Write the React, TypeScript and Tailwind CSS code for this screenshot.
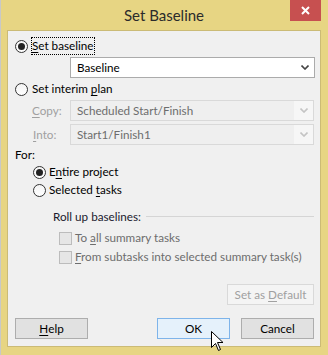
const font = "font-['Segoe_UI','Lato',sans-serif]";

function Radio({ checked }: { checked?: boolean }) {
  return (
    <span className="w-[13px] h-[13px] rounded-full border border-[#333] bg-gradient-to-b from-[#f4f4f4] to-white flex items-center justify-center shrink-0">
      {checked && <span className="w-[7px] h-[7px] rounded-full bg-[#222]" />}
    </span>
  );
}

function Chevron({ color }: { color: string }) {
  return (
    <svg width="8" height="5" viewBox="0 0 8 5">
      <polyline points="0.5,0.5 4,4 7.5,0.5" fill="none" stroke={color} strokeWidth="1.6" />
    </svg>
  );
}

function Select({ value, disabled }: { value: string; disabled?: boolean }) {
  return (
    <div
      className={`ml-[56px] w-[245px] h-[21px] border flex items-center ${
        disabled ? "border-[#d9d9d9] bg-[#efefef] text-[#6d6d6d]" : "border-[#ababab] bg-white text-black"
      }`}
    >
      <span className="flex-1 pl-[6px]">{value}</span>
      <span className={`w-[19px] h-full flex items-center justify-center ${disabled ? "bg-[#f6f6f6]" : ""}`}>
        <Chevron color={disabled ? "#c4c4c4" : "#444"} />
      </span>
    </div>
  );
}

function Button({ children, className = "" }: { children: React.ReactNode; className?: string }) {
  return (
    <div
      className={`h-[21px] border flex items-center justify-center ${className}`}
    >
      {children}
    </div>
  );
}

export default function App() {
  return (
    <div className={`w-[328px] h-[355px] bg-[#e7d583] border-l border-[#c8c8c8] ${font} text-[11.7px] leading-none relative`}>
      <div className="h-[30px] flex items-center justify-center text-[15px] text-[#2b2b2b] pr-[1px]">
        Set Baseline
      </div>
      <div className="absolute right-[7px] top-0 w-[31px] h-[21px] bg-[#c75050] flex items-center justify-center">
        <svg width="9" height="9" viewBox="0 0 9 9">
          <path d="M1 1 L8 8 M8 1 L1 8" stroke="white" strokeWidth="2" />
        </svg>
      </div>

      <div className="ml-[6px] w-[314px] h-[317px] border border-[#cbbb76] bg-[#f0f0f0] px-[6px] flex flex-col text-black">
        <div className="mt-[5px] h-[20px] flex items-center pl-[1px]">
          <Radio checked />
          <span className="ml-[3px] border border-dotted border-black px-[0px] py-[2px] pr-[1px]">
            <span className="underline underline-offset-2">S</span>et baseline
          </span>
        </div>
        <div className="mt-[1px]">
          <Select value="Baseline" />
        </div>
        <div className="mt-[1px] h-[20px] flex items-center pl-[1px]">
          <Radio />
          <span className="ml-[4px]">
            Set interim <span className="underline underline-offset-2">p</span>lan
          </span>
        </div>
        <div className="mt-[1px] h-[21px] flex items-center relative">
          <span className="absolute left-[18px] text-[#a0a0a0]">
            <span className="underline underline-offset-2">C</span>opy:
          </span>
          <Select value="Scheduled Start/Finish" disabled />
        </div>
        <div className="mt-[3px] h-[21px] flex items-center relative">
          <span className="absolute left-[19px] text-[#a0a0a0]">
            <span className="underline underline-offset-2">I</span>nto:
          </span>
          <Select value="Start1/Finish1" disabled />
        </div>
        <div className="mt-[2px] h-[16px] flex items-center pl-[1px]">For:</div>
        <div className="h-[18px] flex items-center pl-[19px]">
          <Radio checked />
          <span className="ml-[3px]">
            E<span className="underline underline-offset-2">n</span>tire project
          </span>
        </div>
        <div className="h-[18px] flex items-center pl-[19px]">
          <Radio />
          <span className="ml-[3px]">
            Selected <span className="underline underline-offset-2">t</span>asks
          </span>
        </div>
        <div className="mt-[9px] h-[17px] flex items-center pl-[39px] text-[#1a1a2e]">
          <span>Roll up baselines:</span>
          <span className="flex-1 ml-[5px] h-px bg-[#d5d5d5]" />
        </div>
        <div className="mt-[4px] h-[18px] flex items-center pl-[45px] text-[#6d6d6d]">
          <span className="w-[13px] h-[13px] border border-[#bcbcbc] bg-[#e6e6e6] shrink-0" />
          <span className="ml-[3px]">
            To <span className="underline underline-offset-2">a</span>ll summary tasks
          </span>
        </div>
        <div className="mt-[1px] h-[18px] flex items-center pl-[45px] text-[#6d6d6d]">
          <span className="w-[13px] h-[13px] border border-[#bcbcbc] bg-[#e6e6e6] shrink-0" />
          <span className="ml-[3px]">
            <span className="underline underline-offset-2">F</span>rom subtasks into selected summary task(s)
          </span>
        </div>
        <div className="mt-[18px] flex justify-end">
          <Button className="w-[87px] border-[#d9d9d9] bg-[#f4f4f4] text-[#a0a0a0]">
            Set as <span className="underline underline-offset-2 ml-[3px]">D</span>efault
          </Button>
        </div>
        <div className="mt-[13px] flex justify-between pl-[1px]">
          <Button className="w-[73px] border-[#adadad] bg-[#e1e1e1]">
            <span className="underline underline-offset-2">H</span>elp
          </Button>
          <div className="flex gap-[11px]">
            <Button className="w-[73px] border-[#7eb4ea] bg-[#e5f1fb]">OK</Button>
            <Button className="w-[73px] border-[#adadad] bg-[#e1e1e1]">Cancel</Button>
          </div>
        </div>
      </div>

      <svg className="absolute left-[210px] top-[331px]" width="13" height="21" viewBox="0 0 13 21">
        <path
          d="M0.5 0.5 L0.5 16.5 L4.5 12.5 L7.5 19.5 L9.5 18.5 L6.5 11.5 L12 11.5 Z"
          fill="white"
          stroke="black"
          strokeWidth="1"
          strokeLinejoin="miter"
        />
      </svg>
    </div>
  );
}
